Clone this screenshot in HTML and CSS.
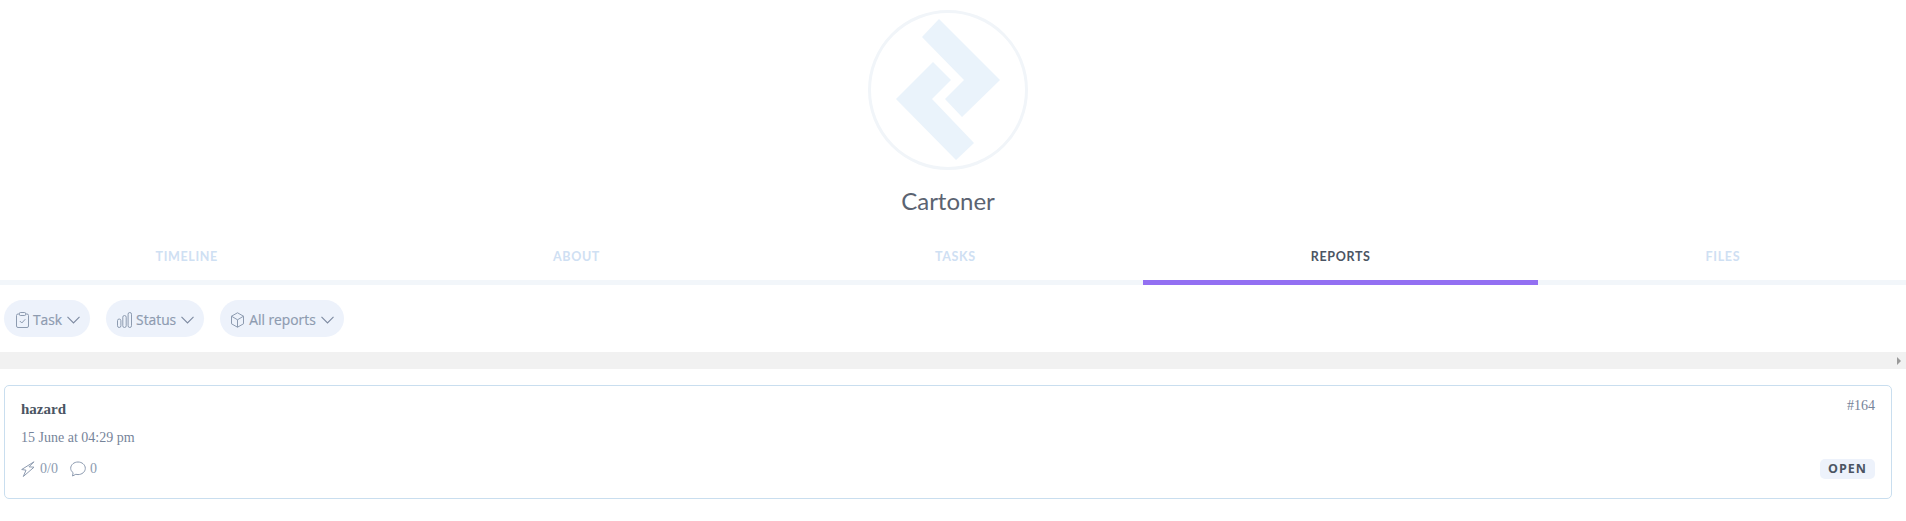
FILE: index.html
```html
<!DOCTYPE html>
<html lang="en">
<head>
<meta charset="utf-8">
<title>Cartoner</title>
<link rel="stylesheet" href="styles.css">
</head>
<body>
<header class="profile">
  <div class="avatar">
    <svg class="logo" viewBox="0 0 160 160" width="160" height="160" aria-hidden="true">
      <polygon points="71,9 132,70 94,107 77,89 96,70 54,27"/>
      <polygon points="65,52 83,70 64,89 106,133 88,150 28,89"/>
    </svg>
  </div>
  <h1 class="name">Cartoner</h1>
</header>
<nav class="tabs">
  <div class="tab-track">
    <a class="tab">TIMELINE</a>
    <a class="tab">ABOUT</a>
    <a class="tab">TASKS</a>
    <a class="tab tab-active">REPORTS</a>
    <a class="tab">FILES</a>
  </div>
</nav>
<section class="filters">
  <button class="chip">
    <svg class="chip-icon icon-task" viewBox="0 0 13 16" aria-hidden="true"><rect x="0.5" y="2" width="12" height="13.500" rx="1.5"/><rect x="3.5" y="0.5" width="6" height="3" rx="0.8" class="chip-fill"/><path d="M3.8 9l2 2 3.500-3.800"/></svg>
    <span>Task</span>
    <svg class="chev" viewBox="0 0 13 8" aria-hidden="true"><path d="M0.500 0.800L6.500 7l6-6.200"/></svg>
  </button>
  <button class="chip">
    <svg class="chip-icon icon-bars" viewBox="0 0 15 16" aria-hidden="true"><rect x="0.500" y="7" width="3.400" height="8.500" rx="1.700"/><rect x="5.800" y="3.500" width="3.400" height="12" rx="1.700"/><rect x="11.100" y="0.500" width="3.400" height="15" rx="1.700"/></svg>
    <span>Status</span>
    <svg class="chev" viewBox="0 0 13 8" aria-hidden="true"><path d="M0.500 0.800L6.500 7l6-6.200"/></svg>
  </button>
  <button class="chip">
    <svg class="chip-icon icon-cube" viewBox="0 0 13 16" aria-hidden="true"><path d="M6.500 0.800l6 3.400v7.600l-6 3.400-6-3.400V4.200z"/><path d="M0.500 4.200l6 3.600 6-3.600M6.500 7.800v7.400"/></svg>
    <span>All reports</span>
    <svg class="chev" viewBox="0 0 13 8" aria-hidden="true"><path d="M0.500 0.800L6.500 7l6-6.200"/></svg>
  </button>
</section>
<div class="scrollbar"><span class="scroll-arrow"></span></div>
<article class="card">
  <div class="card-main">
    <h2 class="card-title">hazard</h2>
    <p class="card-date">15 June at 04:29 pm</p>
    <div class="card-meta">
      <svg class="meta-icon" viewBox="0 0 14 16" aria-hidden="true"><path d="M13 0.800L0.700 8.500 5 9.200 2.300 15.500 13 6.200 8 5.800z"/></svg>
      <span class="meta-text">0/0</span>
      <svg class="meta-icon meta-comment" viewBox="0 0 16 16" aria-hidden="true"><path d="M8 1c3.900 0 7.300 2.700 7.300 6.300S11.900 13.600 8 13.600c-.8 0-1.500-.1-2.200-.3L2.500 15l.6-3.300C1.600 10.600.700 9 .700 7.300.700 3.700 4.100 1 8 1z"/></svg>
      <span class="meta-text meta-count">0</span>
    </div>
  </div>
  <div class="card-side">
    <span class="card-id">#164</span>
    <span class="badge">OPEN</span>
  </div>
</article>
</body>
</html>
```
FILE: styles.css
```css
* { box-sizing: border-box; }
html, body { margin: 0; padding: 0; background: #fff; overflow: hidden; }
body { height: 521px; font-family: "Open Sans", sans-serif; }

.profile { display: flex; flex-direction: column; align-items: center; width: 1896px; padding-top: 10px; }
.avatar { width: 160px; height: 160px; border: 3px solid #f1f5f9; border-radius: 50%; display: flex; align-items: center; justify-content: center; }
.logo { flex: none; fill: #eaf3fb; }
.name { margin: 16px 0 0; height: 30px; font: 400 24px/30px Lato, sans-serif; color: #5b6371; }

.tabs { margin-top: 19px; height: 50px; border-bottom: 5px solid #f2f6fa; }
.tab-track { display: flex; width: 1925px; margin-left: -12px; height: 50px; }
.tab { flex: none; height: 50px; padding: 12px 167.5px 0; font: 700 12.5px/20px Lato, sans-serif; letter-spacing: 0.65px; color: #cfe0f3; white-space: nowrap; }
.tab-active { color: #4b5563; border-bottom: 5px solid #9370f2; }

.filters { display: flex; gap: 16px; padding: 15px 4px; height: 67px; }
.chip { display: flex; align-items: center; gap: 4px; height: 37px; padding: 2px 10px 0 11px; border: 0; border-radius: 19px; background: #edf2fb; color: #8d9bb0; font: 400 13.8px/20px "Open Sans", sans-serif; -webkit-text-stroke: 0.2px #8d9bb0; }
.chip-icon { height: 16px; fill: none; stroke: #8d9bb0; stroke-width: 1; }
.icon-task { width: 13px; margin-left: 1px; }
.icon-bars { width: 15px; }
.icon-cube { width: 13px; margin-right: 1px; }
.chip-fill { fill: #edf2fb; }
.chev { width: 13px; height: 8px; margin-left: 1px; fill: none; stroke: #7d8aa0; stroke-width: 1.1; }

.scrollbar { display: flex; align-items: center; justify-content: flex-end; height: 17px; background: #f1f1f1; padding-right: 5px; }
.scroll-arrow { width: 0; height: 0; border-left: 4px solid #9a9a9a; border-top: 4px solid transparent; border-bottom: 4px solid transparent; }

.card { display: flex; justify-content: space-between; margin: 16px 14px 0 4px; height: 114px; border: 1px solid #c9deef; border-radius: 5px; padding: 10px 16px 19px; }
.card-main { display: flex; flex-direction: column; }
.card-title { margin: 4px 0 0; font: 700 15px/18px "Liberation Serif", serif; color: #4b5563; }
.card-date { margin: 11px 0 0; font: 400 14px/18px "Liberation Serif", serif; color: #76849a; }
.card-meta { display: flex; align-items: center; margin-top: 13px; height: 18px; font: 400 14px/18px "Liberation Serif", serif; color: #8d9bb0; }
.meta-icon { width: 14px; height: 16px; fill: none; stroke: #8d9bb0; stroke-width: 1; }
.meta-text { margin-left: 5px; }
.meta-count { margin-left: 4px; }
.meta-comment { margin-left: 12px; width: 16px; }
.card-side { display: flex; flex-direction: column; justify-content: space-between; align-items: flex-end; }
.card-id { margin-top: 2px; font: 400 14px/16px "Liberation Serif", serif; color: #76849a; }
.badge { height: 20px; padding: 0 8px; border-radius: 5px; background: #edf2fb; color: #4b5563; font: 700 12.5px/20px "Open Sans", sans-serif; letter-spacing: 1px; }
```
